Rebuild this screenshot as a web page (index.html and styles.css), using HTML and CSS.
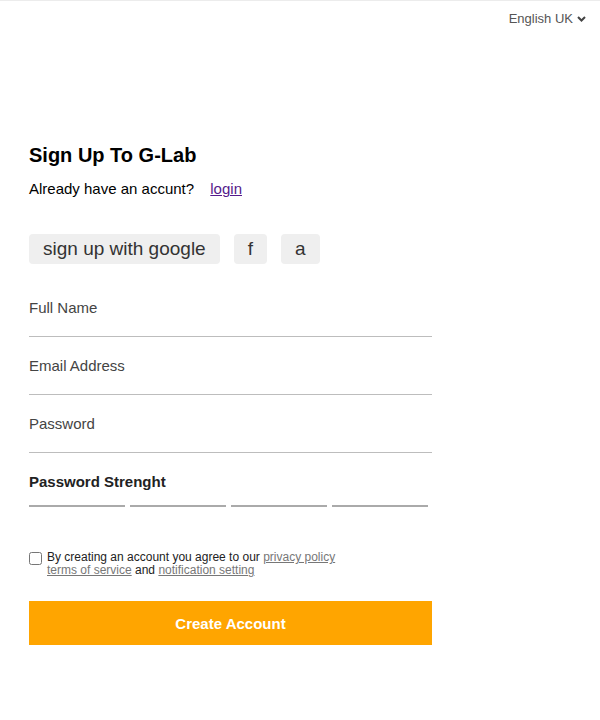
FILE: index.html
```html
<!DOCTYPE html>
<html lang="en">
<head>
<meta charset="utf-8">
<title>Sign Up To G-Lab</title>
<link rel="stylesheet" href="styles.css">
</head>
<body>
<header class="topbar">
  <div class="lang">
    <span>English UK</span>
    <svg class="chev" width="9" height="6" viewBox="0 0 9 6"><path d="M1 1 L4.5 4.5 L8 1" fill="none" stroke="#444" stroke-width="2"/></svg>
  </div>
</header>
<main class="signup">
  <h1 class="title">Sign Up To G-Lab</h1>
  <p class="sub">Already have an accunt? <a href="#" class="login">login</a></p>
  <div class="social">
    <button class="soc">sign up with google</button>
    <button class="soc">f</button>
    <button class="soc">a</button>
  </div>
  <form class="form">
    <div class="field"><span class="label">Full Name</span></div>
    <div class="field"><span class="label">Email Address</span></div>
    <div class="field"><span class="label">Password</span></div>
    <div class="strength">
      <div class="strength-label">Password Strenght</div>
      <div class="bars"><span></span><span></span><span></span><span></span></div>
    </div>
    <label class="agree">
      <input type="checkbox" class="check">
      <span class="agree-text">By creating an account you agree to our <a href="#">privacy policy</a><br><a href="#">terms of service</a> and <a href="#">notification setting</a></span>
    </label>
    <button type="button" class="create">Create Account</button>
  </form>
</main>
</body>
</html>
```
FILE: styles.css
```css
html, body {
  margin: 0;
  padding: 0;
  background: #fff;
  font-family: "Liberation Sans", Arial, sans-serif;
  color: #000;
}
.topbar {
  border-top: 1px solid #ececec;
  height: 35px;
  display: flex;
  justify-content: flex-end;
  align-items: center;
  padding-right: 14px;
}
.lang {
  display: flex;
  align-items: center;
  gap: 4px;
  font-size: 13px;
  color: #555;
  margin-top: 0;
}
.chev { display: block; }
.signup {
  padding-left: 29px;
  width: 403px;
  margin-top: 107px;
}
.title {
  margin: 0;
  font-size: 20px;
  line-height: 24px;
  font-weight: bold;
}
.sub {
  margin: 13px 0 0;
  font-size: 15px;
  line-height: 18px;
}
.login {
  color: #551a8b;
  margin-left: 12px;
}
.social {
  display: flex;
  gap: 14px;
  margin-top: 36px;
}
.soc {
  height: 30px;
  border: none;
  border-radius: 4px;
  background: #efefef;
  font-family: "Liberation Sans", Arial, sans-serif;
  font-size: 19px;
  color: #333;
  padding: 0 14px;
  line-height: 30px;
}
.form {
  margin-top: 16px;
}
.field {
  padding: 20px 0 19px;
  border-bottom: 1px solid #bdbdbd;
}
.field:first-child { padding-top: 19px; }
.label {
  display: block;
  font-size: 15px;
  line-height: 18px;
  color: #444;
}
.strength {
  padding-top: 20px;
}
.strength-label {
  font-size: 15px;
  line-height: 18px;
  font-weight: bold;
  color: #222;
}
.bars {
  display: grid;
  grid-template-columns: repeat(4, 1fr);
  gap: 5px;
  margin-top: 14px;
  margin-right: 4px;
}
.bars span {
  height: 2px;
  background: #aaa;
}
.agree {
  display: flex;
  align-items: flex-start;
  margin-top: 44px;
  font-size: 12px;
  line-height: 13px;
  color: #222;
}
.check {
  margin: 1px 5px 0 0;
  width: 13px;
  height: 13px;
}
.agree-text a { color: #777; }
.create {
  display: block;
  width: 403px;
  height: 44px;
  margin-top: 24px;
  background: #ffa500;
  border: none;
  color: #fff;
  font-family: "Liberation Sans", Arial, sans-serif;
  font-size: 15px;
  font-weight: bold;
}
```
